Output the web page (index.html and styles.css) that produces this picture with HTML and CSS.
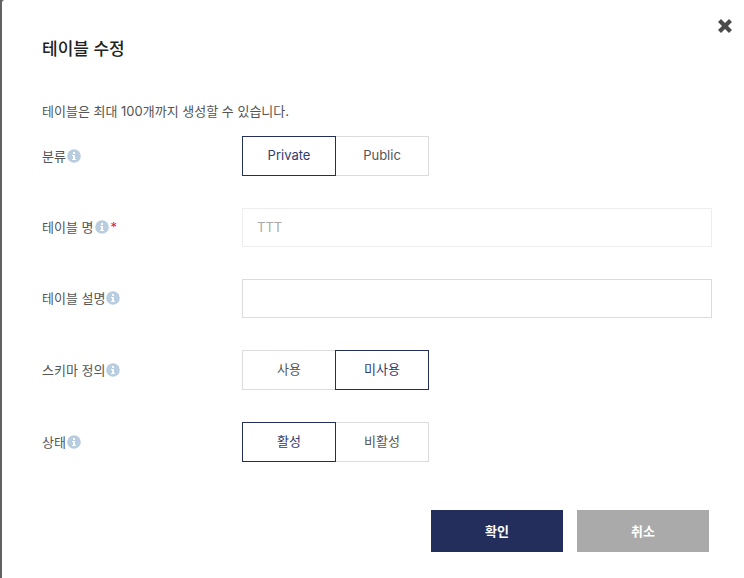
FILE: index.html
```html
<!DOCTYPE html>
<html lang="ko">
<head>
    <meta charset="UTF-8">
    <meta name="viewport" content="width=device-width, initial-scale=1.0">
    <title>테이블 수정</title>
    <link rel="stylesheet" href="styles.css">
</head>
<body>

<svg class="defs" width="0" height="0">
    <symbol id="info" viewBox="0 0 14 14">
        <circle cx="7" cy="7" r="6.8" fill="#b9cde0"/>
        <path d="M6 3h2v2H6zM5 6h3v4h1v1H5v-1h1V7H5z" fill="#fff"/>
    </symbol>
</svg>

<div class="modal">
    <button type="button" class="close" aria-label="닫기">
        <svg width="14" height="14" viewBox="0 0 14 14">
            <path d="M3 3l8 8M11 3l-8 8" stroke="#4a4a4a" stroke-width="4.2" stroke-linecap="square"/>
        </svg>
    </button>

    <h1>테이블 수정</h1>
    <p class="guide">테이블은 최대 100개까지 생성할 수 있습니다.</p>

    <form>
        <div class="row" role="radiogroup" aria-labelledby="typeLabel">
            <span class="label" id="typeLabel">분류<svg class="info"><use href="#info"/></svg></span>
            <div class="segment">
                <input type="radio" id="private" name="type" checked>
                <label for="private">Private</label>
                <input type="radio" id="public" name="type">
                <label for="public">Public</label>
            </div>
        </div>

        <div class="row">
            <label class="label" for="tableName">테이블 명<svg class="info"><use href="#info"/></svg><span class="required">*</span></label>
            <input type="text" class="text" id="tableName" name="tableName" value="TTT" disabled>
        </div>

        <div class="row">
            <label class="label" for="tableDesc">테이블 설명<svg class="info"><use href="#info"/></svg></label>
            <input type="text" class="text" id="tableDesc" name="tableDesc">
        </div>

        <div class="row" role="radiogroup" aria-labelledby="schemaLabel">
            <span class="label" id="schemaLabel">스키마 정의<svg class="info"><use href="#info"/></svg></span>
            <div class="segment">
                <input type="radio" id="schemaOn" name="schema">
                <label for="schemaOn">사용</label>
                <input type="radio" id="schemaOff" name="schema" checked>
                <label for="schemaOff">미사용</label>
            </div>
        </div>

        <div class="row" role="radiogroup" aria-labelledby="statusLabel">
            <span class="label" id="statusLabel">상태<svg class="info"><use href="#info"/></svg></span>
            <div class="segment">
                <input type="radio" id="active" name="status" checked>
                <label for="active">활성</label>
                <input type="radio" id="inactive" name="status">
                <label for="inactive">비활성</label>
            </div>
        </div>

        <div class="buttons">
            <button type="button" class="btn confirm">확인</button>
            <button type="button" class="btn cancel">취소</button>
        </div>
    </form>
</div>

</body>
</html>
```
FILE: styles.css
```css
* {
    box-sizing: border-box;
}

body {
    margin: 0;
    padding-left: 2px;
    background-color: #626264;
    font-family: Inter, "Noto Sans CJK KR", sans-serif;
    font-size: 13px;
    line-height: 20px;
    color: #555;
}

.defs {
    position: absolute;
}

.modal {
    position: relative;
    min-height: 100vh;
    padding: 37px 32px 26px 40px;
    background-color: #fff;
    border-top-left-radius: 3px;
}

.close {
    position: absolute;
    top: 19px;
    right: 12px;
    width: 14px;
    height: 14px;
    padding: 0;
    border: 0;
    background: none;
    cursor: pointer;
}

.close svg {
    display: block;
}

h1 {
    margin: 0 0 40px;
    font-size: 17px;
    line-height: 24px;
    font-weight: 500;
    color: #222;
}

.guide {
    margin: 0 0 15px;
}

form {
    display: flex;
    flex-direction: column;
    gap: 32px;
}

.row {
    display: flex;
    align-items: center;
}

.label {
    display: flex;
    flex: 0 0 200px;
    align-items: center;
    padding-bottom: 1px;
}

.info {
    width: 14px;
    height: 14px;
    margin-left: 1px;
}

.required {
    margin-left: 2px;
    color: #e8202a;
}

.segment {
    display: flex;
}

.segment input {
    position: absolute;
    opacity: 0;
}

.segment label {
    width: 94px;
    height: 40px;
    border: 1px solid #dcdcdc;
    line-height: 36px;
    text-align: center;
    cursor: pointer;
}

.segment label + input + label {
    margin-left: -1px;
}

.segment input:checked + label {
    z-index: 1;
    border-color: #242e5c;
    color: #323c70;
}

.text {
    flex: 1;
    min-width: 0;
    height: 39px;
    padding: 0 14px 2px;
    border: 1px solid #dcdcdc;
    background-color: #fff;
    font: inherit;
    color: #555;
}

.text:disabled {
    border-color: #eee;
    color: #aaa;
}

.buttons {
    display: flex;
    justify-content: flex-end;
    gap: 14px;
    margin-top: 16px;
    padding-right: 3px;
}

.btn {
    width: 132px;
    height: 42px;
    padding: 0;
    border: 0;
    font: inherit;
    font-weight: 700;
    color: #fff;
    cursor: pointer;
}

.confirm {
    background-color: #242e5c;
}

.cancel {
    background-color: #aaa;
}
```
